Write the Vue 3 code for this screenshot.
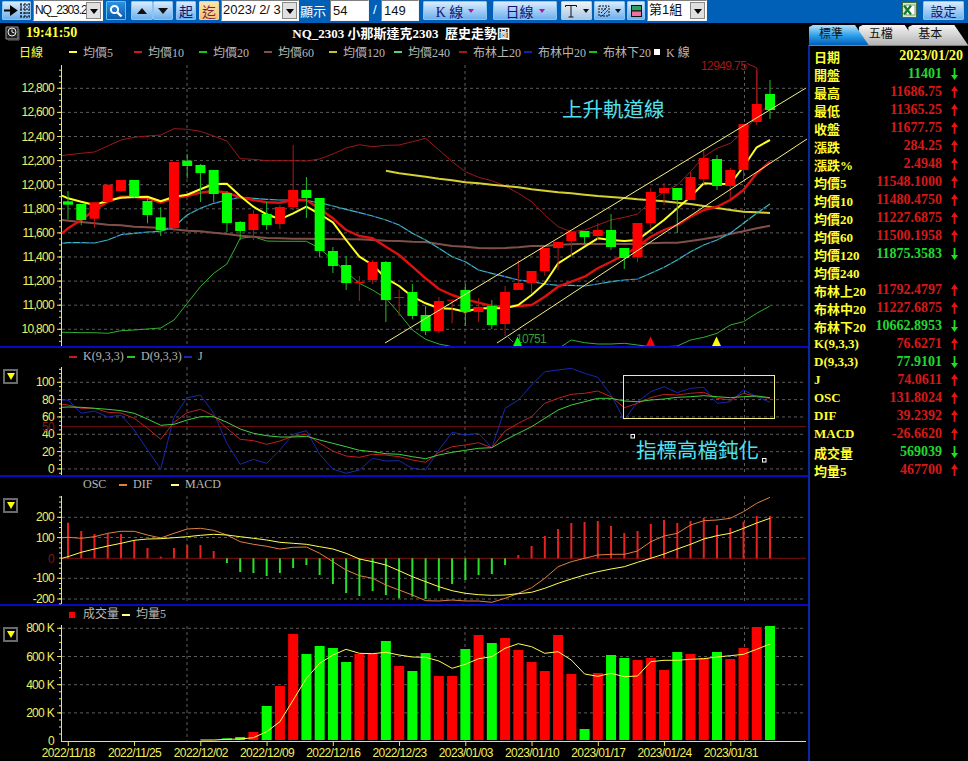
<script setup>
import { computed } from "vue";

// step between bars, every series below has one value per bar
const barX = (i) => 68 + 13.245 * i;

// traced values are in 3x crop units, so page y = top + value / 3
const MAIN_TOP = 60;
const KD_TOP = 345;
const VOL_TOP = 600;

// head is the value where a line leaves the axis, left of the first bar
const toPoints = (values, top, first = 0, head = null) => {
  const pts = values.map((v, i) => `${barX(i + first).toFixed(1)},${(top + v / 3).toFixed(1)}`);
  if (head !== null) pts.unshift(`62,${(top + head / 3).toFixed(1)}`);
  return pts.join(" ");
};

// [bodyTop, bodyBottom, wickTop, wickBottom, up]
const candleData = [
  [424, 434, 393, 478, 0], [432, 480, 432, 495, 0], [427, 476, 427, 503, 1], [374, 426, 374, 430, 1],
  [360, 393, 360, 396, 1], [360, 410, 360, 415, 0], [423, 465, 415, 490, 0], [472, 511, 442, 528, 0],
  [306, 504, 306, 515, 1], [302, 318, 282, 355, 0], [315, 339, 312, 426, 0], [330, 402, 330, 426, 0],
  [399, 489, 393, 516, 0], [486, 513, 483, 540, 0], [462, 510, 450, 540, 1], [462, 495, 426, 510, 0],
  [441, 492, 435, 507, 1], [390, 441, 255, 450, 1], [390, 414, 351, 474, 0], [414, 573, 414, 592, 0],
  [573, 618, 561, 639, 0], [615, 669, 588, 690, 0], [666, 669, 648, 723, 1], [606, 660, 600, 672, 1],
  [606, 720, 603, 786, 0], [711, 714, 688, 768, 1], [696, 768, 672, 778, 0], [765, 813, 738, 825, 0],
  [723, 813, 711, 819, 1], [719, 722, 720, 790, 1], [690, 756, 672, 798, 0], [741, 756, 714, 786, 1],
  [738, 795, 720, 807, 0], [696, 792, 678, 828, 1], [669, 690, 600, 690, 1], [633, 669, 633, 702, 1],
  [564, 633, 564, 648, 1], [546, 564, 546, 630, 1], [516, 543, 516, 588, 1], [513, 531, 513, 552, 0],
  [510, 528, 489, 540, 1], [510, 561, 462, 570, 0], [564, 594, 564, 627, 0], [489, 591, 489, 606, 1],
  [396, 489, 384, 504, 1], [384, 399, 369, 435, 1], [384, 420, 384, 519, 0], [351, 420, 336, 420, 1],
  [294, 357, 267, 372, 1], [297, 378, 285, 390, 0], [330, 378, 324, 420, 1], [192, 330, 192, 357, 1],
  [132, 186, 30, 195, 1], [102, 150, 60, 177, 0],
];

const ma5 = [415, 425, 435, 422, 413, 411, 410, 424, 410, 404, 388, 372, 371, 408, 440, 463, 478, 460, 440, 462, 487, 540, 590, 615, 655, 678, 710, 730, 745, 746, 755, 745, 745, 745, 735, 705, 670, 610, 585, 560, 535, 540, 543, 540, 510, 480, 445, 410, 370, 372, 372, 320, 262, 240];
const ma10 = [505, 480, 450, 425, 410, 411, 415, 428, 415, 408, 398, 392, 398, 412, 420, 427, 428, 420, 420, 447, 475, 510, 528, 535, 560, 585, 620, 655, 687, 705, 718, 728, 738, 740, 738, 735, 710, 680, 665, 650, 625, 605, 585, 560, 530, 510, 495, 470, 450, 440, 420, 390, 340, 305];
const ma20 = [548, 548, 549, 540, 524, 520, 516, 514, 500, 465, 445, 430, 420, 412, 415, 418, 420, 420, 422, 428, 438, 448, 458, 468, 480, 495, 520, 540, 565, 590, 605, 630, 640, 650, 660, 665, 672, 676, 676, 678, 672, 665, 660, 657, 640, 622, 600, 575, 555, 540, 520, 490, 460, 432];
const ma60 = [482, 486, 490, 494, 496, 500, 502, 504, 508, 512, 514, 518, 522, 527, 530, 534, 535, 536, 536, 537, 537, 538, 538, 540, 542, 543, 545, 546, 552, 558, 560, 564, 565, 564, 562, 558, 558, 554, 553, 551, 552, 552, 552, 552, 550, 548, 548, 543, 537, 530, 522, 514, 505, 497];
const ma120 = [332, 340, 345, 350, 356, 361, 367, 370, 374, 378, 382, 388, 392, 397, 400, 404, 408, 411, 414, 418, 421, 424, 428, 432, 438, 444, 450, 455, 457, 459];
const bbUpper = [284, 280, 276, 258, 240, 232, 228, 225, 206, 208, 214, 228, 243, 296, 298, 302, 302, 302, 303, 297, 282, 264, 254, 260, 256, 255, 245, 235, 270, 305, 335, 352, 362, 378, 400, 425, 465, 500, 515, 510, 495, 480, 472, 462, 425, 395, 375, 335, 290, 265, 250, 215, 170, 130];
const bbLower = [817, 818, 818, 820, 812, 810, 807, 804, 780, 730, 680, 640, 612, 535, 530, 543, 544, 544, 544, 565, 600, 635, 670, 690, 715, 760, 810, 838, 852, 860, 866, 866, 866, 866, 866, 866, 866, 866, 840, 848, 852, 852, 850, 855, 860, 860, 858, 840, 832, 820, 795, 785, 760, 738];

const kLine = [180, 190, 190, 202, 204, 220, 250, 283, 232, 203, 193, 212, 250, 283, 287, 298, 288, 273, 268, 295, 318, 333, 337, 328, 330, 335, 345, 352, 322, 305, 300, 293, 308, 258, 235, 215, 175, 160, 148, 145, 138, 155, 188, 175, 158, 148, 150, 145, 142, 160, 165, 145, 155, 160];
const dLine = [186, 187, 190, 193, 197, 205, 222, 241, 238, 225, 215, 215, 232, 252, 265, 272, 276, 276, 274, 285, 295, 305, 316, 320, 326, 328, 335, 341, 330, 322, 316, 310, 308, 285, 265, 245, 220, 195, 180, 170, 160, 160, 168, 170, 165, 162, 157, 155, 152, 155, 158, 155, 153, 158];
const jLine = [165, 205, 198, 216, 210, 255, 315, 372, 216, 158, 150, 205, 295, 358, 343, 355, 315, 268, 257, 328, 372, 385, 375, 340, 348, 347, 370, 375, 315, 262, 270, 265, 308, 190, 165, 120, 80, 75, 70, 85, 97, 150, 225, 170, 140, 125, 143, 130, 127, 175, 170, 135, 155, 172];

const oscTops = [533, 558, 567, 565, 567, 585, 609, 635, 609, 600, 600, 618, 654, 681, 684, 693, 684, 669, 660, 690, 717, 744, 753, 738, 750, 760, 755, 762, 738, 717, 705, 690, 687, 660, 630, 603, 573, 552, 534, 531, 528, 543, 564, 558, 537, 525, 534, 528, 518, 540, 549, 530, 513, 513];
const difLine = [577, 580, 575, 565, 559, 559, 570, 579, 565, 552, 550, 556, 570, 590, 598, 604, 612, 607, 606, 625, 650, 675, 692, 700, 720, 735, 750, 767, 768, 765, 768, 768, 772, 760, 745, 728, 700, 665, 650, 640, 630, 628, 628, 618, 590, 573, 565, 540, 527, 525, 520, 500, 475, 457];
const macdLine = [635, 622, 612, 603, 595, 586, 582, 581, 578, 575, 571, 568, 570, 575, 580, 585, 592, 595, 598, 605, 612, 625, 642, 650, 660, 677, 695, 710, 725, 737, 745, 749, 751, 750, 746, 742, 730, 715, 702, 690, 680, 672, 665, 652, 640, 627, 612, 598, 582, 572, 565, 550, 534, 520];

// volume starts at bar 12, earlier bars are empty
const volTops = [415, 411, 396, 318, 258, 102, 162, 138, 144, 186, 162, 162, 123, 198, 213, 159, 228, 228, 147, 105, 129, 114, 150, 186, 213, 105, 222, 387, 219, 165, 174, 180, 174, 210, 156, 162, 174, 156, 177, 144, 81, 78];
const volUp = [0, 0, 1, 0, 1, 1, 0, 0, 0, 0, 1, 1, 0, 1, 0, 0, 1, 1, 0, 1, 0, 1, 1, 1, 1, 1, 1, 0, 1, 0, 0, 1, 1, 1, 0, 1, 1, 0, 1, 1, 1, 0];
const volAvg = [420, 420, 418, 417, 413, 395, 365, 300, 235, 190, 165, 148, 160, 161, 157, 165, 171, 172, 183, 205, 193, 176, 170, 145, 131, 140, 160, 155, 180, 222, 229, 220, 230, 228, 185, 181, 181, 178, 176, 171, 167, 163, 148, 132];

const candles = computed(() =>
  candleData.map(([top, bottom, wickTop, wickBottom, up], i) => ({
    id: i,
    x: barX(i),
    y: MAIN_TOP + top / 3,
    h: Math.max((bottom - top) / 3, 1),
    wy1: MAIN_TOP + wickTop / 3,
    wy2: MAIN_TOP + wickBottom / 3,
    up,
  }))
);

const oscBars = computed(() =>
  oscTops.map((top, i) => ({ id: i, x: barX(i), y: KD_TOP + top / 3, up: top < 640 }))
);

const volBars = computed(() =>
  volTops.map((top, i) => ({
    id: i,
    x: barX(i + 12),
    y: VOL_TOP + top / 3,
    h: (420 - top) / 3,
    up: volUp[i],
  }))
);

const minorTicks = (start, step, end) => {
  const out = [];
  for (let y = start; y < end; y += step) out.push(y);
  return out;
};

const priceAxis = ["12,800", "12,600", "12,400", "12,200", "12,000", "11,800", "11,600", "11,400", "11,200", "11,000", "10,800"].map((label, i) => ({
  label,
  y: 88.3 + i * 24.1,
}));
const kdAxis = ["100", "80", "60", "40", "20", "0"].map((label, i) => ({ label, y: 382.3 + i * 17.33 }));
const macdAxis = [
  { label: "200", y: 517.3 },
  { label: "100", y: 537.5 },
  { label: "-100", y: 578.3 },
  { label: "-200", y: 599 },
];
const volAxis = ["800 K", "600 K", "400 K", "200 K"].map((label, i) => ({ label, y: 628.3 + i * 28.2 }));

const vGrid = [187, 465, 744.5];

const dateLabels = ["2022/11/18", "2022/11/25", "2022/12/02", "2022/12/09", "2022/12/16", "2022/12/23", "2023/01/03", "2023/01/10", "2023/01/17", "2023/01/24", "2023/01/31"].map((label, i) => ({
  label,
  x: 68.3 + i * 66.25,
}));

const mainLegend = [
  { name: "均價5", color: "#ffff40" },
  { name: "均價10", color: "#d01818" },
  { name: "均價20", color: "#18c018" },
  { name: "均價60", color: "#805048" },
  { name: "均價120", color: "#c8c030" },
  { name: "均價240", color: "#50d080" },
  { name: "布林上20", color: "#a01818" },
  { name: "布林中20", color: "#1020b0" },
  { name: "布林下20", color: "#18c018" },
];

const quotes = [
  { name: "開盤", value: "11401", up: false },
  { name: "最高", value: "11686.75", up: true },
  { name: "最低", value: "11365.25", up: true },
  { name: "收盤", value: "11677.75", up: true },
  { name: "漲跌", value: "284.25", up: true },
  { name: "漲跌%", value: "2.4948", up: true },
  { name: "均價5", value: "11548.1000", up: true },
  { name: "均價10", value: "11480.4750", up: true },
  { name: "均價20", value: "11227.6875", up: true },
  { name: "均價60", value: "11500.1958", up: true },
  { name: "均價120", value: "11875.3583", up: false },
  { name: "均價240", value: "", up: null },
  { name: "布林上20", value: "11792.4797", up: true },
  { name: "布林中20", value: "11227.6875", up: true },
  { name: "布林下20", value: "10662.8953", up: false },
  { name: "K(9,3,3)", value: "76.6271", up: true },
  { name: "D(9,3,3)", value: "77.9101", up: false },
  { name: "J", value: "74.0611", up: true },
  { name: "OSC", value: "131.8024", up: true },
  { name: "DIF", value: "39.2392", up: true },
  { name: "MACD", value: "-26.6620", up: true },
  { name: "成交量", value: "569039", up: false },
  { name: "均量5", value: "467700", up: true },
];
</script>

<template>
  <div class="screen">
    <header class="toolbar">
      <button class="btn tb-list">
        <svg width="27" height="17" viewBox="0 0 27 17">
          <path d="M1 8.5h9M8 5l5 3.5-5 3.5z" fill="#000" stroke="#000" stroke-width="2" />
          <path d="M18 1v15M22 1v15M26 1v15M17 3h10M17 7h10M17 11h10M17 15h10" stroke="#000" stroke-dasharray="2 1" fill="none" />
        </svg>
      </button>
      <div class="combo tb-symbol"><span class="combo-text symbol-text">NQ_2303.2</span><span class="combo-arrow"></span></div>
      <button class="btn tb-search">
        <svg width="16" height="16" viewBox="0 0 16 16">
          <circle cx="6.5" cy="6.5" r="3.6" fill="none" stroke="#fff" stroke-width="2" />
          <path d="M9.5 9.5l4 4" stroke="#fff" stroke-width="2.4" />
        </svg>
      </button>
      <button class="btn tb-up"><span class="tri-up"></span></button>
      <button class="btn tb-down"><span class="tri-down"></span></button>
      <button class="btn tb-start">起</button>
      <button class="btn tb-end">迄</button>
      <div class="combo tb-date"><span class="combo-text">2023/ 2/ 3</span><span class="combo-arrow"></span></div>
      <span class="tb-label">顯示</span>
      <span class="field tb-count">54</span>
      <span class="tb-slash">/</span>
      <span class="field tb-total">149</span>
      <button class="btn tb-kline">K 線<i class="caret"></i></button>
      <button class="btn tb-period">日線<i class="caret"></i></button>
      <button class="btn tb-text">
        <svg width="14" height="14" viewBox="0 0 14 14"><path d="M1.5 3V1.5h11V3M7 1.5V13M4.5 13h5" fill="none" stroke="#111" /></svg>
        <i class="caret dark"></i>
      </button>
      <button class="btn tb-draw">
        <svg width="12" height="14" viewBox="0 0 12 14"><path d="M1 2h10v10H1zM3 5h6M3 9l6-6M4 12l6-6" fill="none" stroke="#111" stroke-dasharray="2 1" /></svg>
        <i class="caret dark"></i>
      </button>
      <button class="btn tb-color">
        <svg width="11" height="12" viewBox="0 0 11 12">
          <rect x="0.5" y="0.5" width="10" height="5.5" fill="#30a060" stroke="#111" />
          <rect x="0.5" y="6" width="10" height="5.5" fill="#f070a0" stroke="#111" />
        </svg>
      </button>
      <div class="combo tb-group"><span class="combo-text">第1組</span><span class="combo-arrow"></span></div>
      <span class="tb-excel">
        <svg width="15" height="16" viewBox="0 0 15 16">
          <rect x="0.5" y="0.5" width="14" height="15" fill="#d8e8c8" stroke="#407040" />
          <rect x="4" y="3" width="9" height="10" fill="#fff" stroke="#80a080" />
          <path d="M2 3.5l7 9M9 3.5l-7 9" stroke="#1a7a30" stroke-width="2.2" />
        </svg>
      </span>
      <button class="btn tb-settings">設定</button>
    </header>

    <div class="body">
      <main class="charts">
        <div class="title-row">
          <svg class="clock" width="15" height="15" viewBox="0 0 15 15">
            <path d="M1 1h12v12H1z" fill="#222" stroke="#999" />
            <path d="M14 3v11H3" fill="none" stroke="#666" />
            <circle cx="7" cy="6" r="4" fill="none" stroke="#eee" />
            <path d="M7 3.5V6l2.5 1" fill="none" stroke="#eee" />
          </svg>
          <span class="time">19:41:50</span>
          <span class="title">NQ_2303 小那斯達克2303&nbsp; 歷史走勢圖</span>
        </div>
        <div class="legend main-legend">
          <span class="period">日線</span>
          <span v-for="item in mainLegend" :key="item.name" class="legend-item">
            <i class="dash" :style="{ background: item.color }"></i>{{ item.name }}
          </span>
          <span class="legend-item"><i class="square white"></i>K 線</span>
        </div>

        <svg class="plot" width="808" height="286" viewBox="0 60 808 286">
          <g class="grid">
            <line v-for="t in priceAxis" :key="t.label" x1="62" x2="806" :y1="t.y" :y2="t.y" />
            <line v-for="x in vGrid" :key="x" :x1="x" :x2="x" y1="65" y2="346" />
          </g>
          <g class="axis">
            <line x1="61.5" x2="61.5" y1="65" y2="346" />
            <line v-for="y in minorTicks(70.2, 6.025, 346)" :key="y" x1="59" x2="61" :y1="y" :y2="y" />
            <line v-for="t in priceAxis" :key="t.label" x1="57" x2="61" :y1="t.y" :y2="t.y" />
          </g>
          <text v-for="t in priceAxis" :key="t.label" class="tick-label" x="54" :y="t.y + 4">{{ t.label }}</text>

          <polyline class="ln" :points="toPoints(bbLower, MAIN_TOP, 0, 817)" stroke="#30b030" />
          <polyline class="ln" :points="toPoints(bbUpper, MAIN_TOP, 0, 287)" stroke="#a01818" />
          <polyline class="ln" :points="toPoints(ma60, MAIN_TOP, 0, 480)" stroke="#805048" stroke-width="2" />
          <polyline class="ln" :points="toPoints(ma120, MAIN_TOP, 24)" stroke="#d8d030" stroke-width="2" />
          <polyline class="ln" :points="toPoints(ma20, MAIN_TOP, 0, 550)" stroke="#40b8b8" stroke-width="1.2" />
          <polyline class="ln" :points="toPoints(ma20, MAIN_TOP, 0, 550)" stroke="#1830c0" stroke-dasharray="2 7" />
          <polyline class="ln" :points="toPoints(ma10, MAIN_TOP, 0, 520)" stroke="#e01010" stroke-width="2.4" />
          <polyline class="ln" :points="toPoints(ma5, MAIN_TOP, 0, 407)" stroke="#ffff20" stroke-width="2" />

          <g v-for="c in candles" :key="c.id">
            <line :x1="c.x" :x2="c.x" :y1="c.wy1" :y2="c.wy2" :stroke="c.up ? '#b01818' : '#20c020'" />
            <rect :x="c.x - 5" :y="c.y" width="10" :height="c.h" :fill="c.up ? '#ff0000' : '#00ff00'" />
          </g>

          <line class="channel" x1="385" y1="343" x2="806" y2="88" />
          <line class="channel" x1="497" y1="343" x2="807" y2="139" />

          <path d="M747 63.5l10 4.5V104" fill="none" stroke="#a01818" />
          <text class="peak" x="701" y="70">12949.75</text>
          <path d="M507 336l6 6" stroke="#2a9a2a" fill="none" />
          <text class="trough" x="516" y="343">10751</text>
          <path d="M513 346l4.5-9.5 4.5 9.5z" fill="#00ff00" />
          <path d="M646 346l4.5-9.5 4.5 9.5z" fill="#ff0000" />
          <path d="M712 346l4.5-9.5 4.5 9.5z" fill="#ffff00" />
          <text class="note" x="562" y="117">上升軌道線</text>
        </svg>

        <div class="sep"></div>

        <section class="panel">
          <div class="legend kd-legend">
            <span class="kd-k"><i class="dash red"></i>K(9,3,3)</span>
            <span class="kd-d"><i class="dash green"></i>D(9,3,3)</span>
            <span class="kd-j"><i class="dash navy"></i>J</span>
          </div>
          <svg class="plot" width="808" height="109" viewBox="0 366 808 109">
            <g class="grid">
              <line v-for="t in kdAxis" :key="t.label" x1="62" x2="806" :y1="t.y" :y2="t.y" />
              <line v-for="x in vGrid" :key="x" :x1="x" :x2="x" y1="367" y2="475" />
            </g>
            <g class="axis">
              <line x1="61.5" x2="61.5" y1="367" y2="475" />
              <line v-for="y in minorTicks(369.3, 4.33, 475)" :key="y" x1="59" x2="61" :y1="y" :y2="y" />
              <line v-for="t in kdAxis" :key="t.label" x1="57" x2="61" :y1="t.y" :y2="t.y" />
            </g>
            <text v-for="t in kdAxis" :key="t.label" class="tick-label" x="54" :y="t.y + 4">{{ t.label }}</text>
            <text class="tick-label dim" x="54" y="431">50</text>
            <line x1="62" x2="806" y1="426.7" y2="426.7" stroke="#801010" />
            <polyline class="ln" :points="toPoints(jLine, KD_TOP, 0, 165)" stroke="#1828b0" />
            <polyline class="ln" :points="toPoints(kLine, KD_TOP, 0, 178)" stroke="#c02020" />
            <polyline class="ln" :points="toPoints(dLine, KD_TOP, 0, 187)" stroke="#40d040" />
            <rect class="note-box" x="623.5" y="375.5" width="151" height="43" />
            <rect class="handle" x="631" y="434.5" width="3.5" height="3.5" />
            <rect class="handle" x="762.5" y="458.5" width="3.5" height="3.5" />
            <text class="note" x="636" y="458">指標高檔鈍化</text>
          </svg>
          <button class="toggle"><span class="toggle-tri"></span></button>
        </section>

        <div class="sep"></div>

        <section class="panel">
          <div class="legend macd-legend">
            <span class="m-osc">OSC</span>
            <span class="m-dif"><i class="dash orange"></i>DIF</span>
            <span class="m-macd"><i class="dash pale"></i>MACD</span>
          </div>
          <svg class="plot open" width="808" height="110" viewBox="0 494 808 110">
            <g class="grid">
              <line v-for="t in macdAxis" :key="t.label" x1="62" x2="806" :y1="t.y" :y2="t.y" />
              <line v-for="x in vGrid" :key="x" :x1="x" :x2="x" y1="496" y2="604" />
            </g>
            <g class="axis">
              <line x1="61.5" x2="61.5" y1="496" y2="604" />
              <line v-for="y in minorTicks(497, 5.09, 604)" :key="y" x1="59" x2="61" :y1="y" :y2="y" />
              <line v-for="t in macdAxis" :key="t.label" x1="57" x2="61" :y1="t.y" :y2="t.y" />
            </g>
            <text v-for="t in macdAxis" :key="t.label" class="tick-label" x="54" :y="t.y + 4">{{ t.label }}</text>
            <text class="tick-label dim" x="54" y="562.5">0</text>
            <line x1="62" x2="806" y1="558.3" y2="558.3" stroke="#801010" />
            <line
              v-for="b in oscBars"
              :key="b.id"
              :x1="b.x"
              :x2="b.x"
              :y1="b.y"
              y2="558.3"
              :stroke="b.up ? '#e82020' : '#28e028'"
              stroke-width="2"
            />
            <polyline class="ln" :points="toPoints(difLine, KD_TOP, 0, 578)" stroke="#e08040" />
            <polyline class="ln" :points="toPoints(macdLine, KD_TOP, 0, 640)" stroke="#ffff50" />
          </svg>
          <button class="toggle"><span class="toggle-tri"></span></button>
        </section>

        <div class="sep"></div>

        <section class="panel">
          <div class="legend vol-legend">
            <span class="v-vol"><i class="square red-sq"></i>成交量</span>
            <span class="v-avg"><i class="dash pale"></i>均量5</span>
          </div>
          <svg class="plot open" width="808" height="137" viewBox="0 624 808 137">
            <g class="grid">
              <line v-for="t in volAxis" :key="t.label" x1="62" x2="806" :y1="t.y" :y2="t.y" />
              <line v-for="x in vGrid" :key="x" :x1="x" :x2="x" y1="626" y2="741" />
            </g>
            <g class="axis">
              <line x1="61.5" x2="61.5" y1="625" y2="742" />
              <line x1="61" x2="806" y1="741.5" y2="741.5" />
              <line v-for="y in minorTicks(628.3, 7.05, 741)" :key="y" x1="59" x2="61" :y1="y" :y2="y" />
              <line v-for="t in volAxis" :key="t.label" x1="57" x2="61" :y1="t.y" :y2="t.y" />
              <line v-for="d in dateLabels" :key="d.label" :x1="d.x" :x2="d.x" y1="742" y2="746" />
            </g>
            <text v-for="t in volAxis" :key="t.label" class="tick-label" x="54" :y="t.y + 4">{{ t.label }}</text>
            <text class="tick-label" x="54" y="744.5">0</text>
            <rect v-for="b in volBars" :key="b.id" :x="b.x - 5" :y="b.y" width="10" :height="b.h" :fill="b.up ? '#ff0000' : '#00ff00'" />
            <polyline class="ln" :points="toPoints(volAvg, VOL_TOP, 10)" stroke="#ffff50" />
            <text v-for="d in dateLabels" :key="d.label" class="date-label" :x="d.x" y="757">{{ d.label }}</text>
          </svg>
          <button class="toggle"><span class="toggle-tri"></span></button>
        </section>
      </main>

      <aside class="side">
        <nav class="tabs">
          <span class="tab active">標準</span>
          <span class="tab second">五檔</span>
          <span class="tab third">基本</span>
        </nav>
        <div class="quote-list">
          <div class="quote date-row"><span class="q-name">日期</span><span class="q-date">2023/01/20</span></div>
          <div v-for="q in quotes" :key="q.name" class="quote">
            <span class="q-name">{{ q.name }}</span>
            <span class="q-value" :class="q.up ? 'rise' : 'fall'">{{ q.value }}</span>
            <svg v-if="q.up !== null" class="q-arrow" width="7" height="12" viewBox="0 0 7 12">
              <path v-if="q.up" d="M3.5 0L7 5H4.4v7H2.6V5H0z" fill="#ee1010" />
              <path v-else d="M3.5 12L7 7H4.4V0H2.6v7H0z" fill="#20e020" />
            </svg>
          </div>
        </div>
      </aside>
    </div>
  </div>
</template>

<style>
html,
body {
  margin: 0;
  background: #000;
}
</style>

<style scoped>
.screen {
  width: 968px;
  height: 761px;
  overflow: hidden;
  background: #000;
  display: flex;
  flex-direction: column;
  font-family: "Liberation Sans", "Noto Sans CJK TC", sans-serif;
}

/* toolbar */
.toolbar {
  height: 23px;
  flex: none;
  background: #0060b8;
  display: flex;
  align-items: flex-start;
  font-size: 13px;
  color: #101060;
}
.btn {
  height: 19px;
  padding: 0;
  margin-top: 1px;
  border: 1px solid #8cc4f4;
  border-radius: 1px;
  background: linear-gradient(#d8ebfc, #6fb0ee);
  display: flex;
  align-items: center;
  justify-content: center;
  gap: 5px;
  font: 14px "Liberation Serif", "Noto Sans CJK TC", sans-serif;
  color: #14146e;
  box-sizing: border-box;
}
.tb-list { width: 29px; margin-left: 2px; }
.tb-symbol { width: 70px; margin-left: 2px; }
.tb-search { width: 20px; margin-left: 3px; background: linear-gradient(#2a90e0, #0a5cb0); border-color: #50c8f0; }
.tb-up { width: 22px; margin-left: 5px; }
.tb-down { width: 20px; margin-left: 0; }
.tb-start { width: 20px; margin-left: 3px; }
.tb-end { width: 20px; margin-left: 3px; background: linear-gradient(#fbe6b0, #f4c070); border-color: #f4d090; color: #7a2040; }
.tb-date { width: 78px; margin-left: 2px; }
.tb-label { width: 26px; margin-left: 1px; margin-top: 1px; color: #fff; font: 13px/19px "Noto Sans CJK TC", sans-serif; }
.tb-count { width: 39px; margin-left: 4px; }
.tb-slash { width: 12px; padding-left: 4px; box-sizing: border-box; color: #fff; line-height: 20px; }
.tb-total { width: 38px; }
.tb-kline { width: 64px; margin-left: 4px; }
.tb-period { width: 64px; margin-left: 6px; }
.tb-text { width: 31px; margin-left: 4px; background: linear-gradient(#f0f4f4, #a8c8e8); border-color: #d8c890; }
.tb-draw { width: 31px; margin-left: 2px; }
.tb-color { width: 18px; margin-left: 2px; }
.tb-group { width: 60px; margin-left: 2px; }
.tb-excel { width: 15px; margin-left: auto; margin-top: 2px; height: 16px; }
.tb-settings { width: 41px; margin-left: 6px; margin-right: 4px; font-size: 13px; }
.caret {
  width: 0;
  height: 0;
  border-left: 3.5px solid transparent;
  border-right: 3.5px solid transparent;
  border-top: 4px solid #a020a0;
}
.caret.dark { border-top-color: #111; }
.tri-up,
.tri-down {
  width: 0;
  height: 0;
  border-left: 5px solid transparent;
  border-right: 5px solid transparent;
}
.tri-up { border-bottom: 6px solid #111; }
.tri-down { border-top: 6px solid #111; }

.combo,
.field {
  height: 21px;
  background: #fff;
  border: 1px solid #f4f4f4;
  border-top-color: #808080;
  border-left-color: #808080;
  box-sizing: border-box;
  color: #111;
  font: 13px/19px "Liberation Sans", "Noto Sans CJK TC", sans-serif;
}
.combo {
  display: flex;
  overflow: hidden;
  padding: 1px;
  border-width: 1px;
}
.field { padding-left: 2px; }
.combo-text {
  flex: 1;
  min-width: 0;
  white-space: nowrap;
  overflow: hidden;
  line-height: 16px;
}
.symbol-text {
  font-size: 12px;
  letter-spacing: -1.1px;
}
.combo-arrow {
  flex: none;
  width: 15px;
  background: #e0e0e0;
  border: 1px solid #888;
  box-sizing: border-box;
  position: relative;
}
.combo-arrow::after {
  content: "";
  position: absolute;
  left: 3px;
  top: 6px;
  border-left: 4px solid transparent;
  border-right: 4px solid transparent;
  border-top: 5px solid #000;
}

/* charts */
.body {
  flex: 1;
  min-height: 0;
  display: flex;
}
.charts {
  width: 808px;
  flex: none;
  display: flex;
  flex-direction: column;
}
.title-row {
  height: 20px;
  flex: none;
  display: flex;
  align-items: center;
  padding-left: 5px;
  position: relative;
}
.time {
  margin-left: 6px;
  color: #ffff40;
  font: bold 14px "Liberation Serif", serif;
}
.title {
  margin-left: 215px;
  margin-bottom: 2px;
  color: #fff;
  font: bold 13px "Liberation Serif", "Noto Sans CJK TC", serif;
  white-space: nowrap;
}
.legend {
  display: flex;
  align-items: center;
  color: #b8b8b8;
  font: 12px "Liberation Serif", "Noto Sans CJK TC", serif;
  white-space: nowrap;
}
.main-legend {
  height: 17px;
  flex: none;
}
.period {
  width: 69px;
  padding-left: 19px;
  box-sizing: border-box;
  color: #ffff40;
}
.legend-item {
  width: 65px;
  flex: none;
  display: flex;
  align-items: center;
}
.dash {
  display: inline-block;
  width: 8px;
  height: 2px;
  margin-right: 6px;
  flex: none;
  vertical-align: middle;
}
.red { background: #c02020; }
.green { background: #30c030; }
.navy { background: #1828b0; }
.orange { background: #e08040; }
.pale { background: #ffff80; }
.square {
  display: inline-block;
  width: 6px;
  height: 6px;
  margin-right: 6px;
}
.white { background: #fff; }
.red-sq { background: #ff0000; margin-right: 8px; }
.sep {
  height: 2px;
  flex: none;
  background: #0808c8;
}
.panel {
  position: relative;
  flex: none;
}
.kd-legend {
  height: 18px;
  box-sizing: border-box;
  padding-bottom: 2px;
}
.macd-legend {
  height: 17px;
  box-sizing: border-box;
  padding-bottom: 2px;
}
.vol-legend {
  height: 18px;
  box-sizing: border-box;
  padding-bottom: 4px;
}
.kd-k { margin-left: 69px; width: 58px; }
.kd-d { width: 57px; }
.m-osc { margin-left: 83px; width: 36px; }
.m-dif { width: 52px; }
.v-vol { margin-left: 69px; width: 53px; }
.plot {
  display: block;
}
.plot.open {
  overflow: visible;
}
.grid line {
  stroke: #5c5c5c;
  stroke-dasharray: 3 3;
}
.axis line {
  stroke: #e8e860;
}
.tick-label {
  fill: #f0f060;
  font: 12px "Liberation Sans", sans-serif;
  letter-spacing: -0.7px;
  text-anchor: end;
}
.tick-label.dim { fill: #801818; }
.date-label {
  fill: #f0f060;
  font: 12px "Liberation Sans", sans-serif;
  letter-spacing: -0.6px;
  text-anchor: middle;
}
.ln {
  fill: none;
  stroke-linejoin: round;
}
.channel {
  stroke: #f4f080;
}
.peak {
  fill: #a01818;
  font: 12px "Liberation Sans", sans-serif;
  letter-spacing: -0.6px;
}
.trough {
  fill: #30a030;
  font: 12px "Liberation Sans", sans-serif;
  letter-spacing: -0.67px;
}
.note {
  fill: #50e0f0;
  font: 20.5px "Noto Sans CJK TC", sans-serif;
}
.note-box {
  fill: none;
  stroke: #f4f080;
}
.handle {
  fill: #000;
  stroke: #fff;
}
.toggle {
  position: absolute;
  top: 21px;
  left: 3px;
  width: 15px;
  height: 15px;
  padding: 0;
  background: #000;
  border: 2px solid #6a6a6a;
  box-sizing: border-box;
  display: flex;
  align-items: center;
  justify-content: center;
}
.toggle-tri {
  width: 0;
  height: 0;
  border-left: 4px solid transparent;
  border-right: 4px solid transparent;
  border-top: 7px solid #ffff00;
}

/* quote side */
.side {
  flex: 1;
  min-width: 0;
  display: flex;
  flex-direction: column;
}
.tabs {
  height: 22px;
  padding-top: 2px;
  display: flex;
  flex: none;
  box-sizing: border-box;
}
.tab {
  width: 60px;
  height: 20px;
  margin-right: -10px;
  padding-left: 10px;
  box-sizing: border-box;
  background: linear-gradient(#f4f4f4, #b4b4b4);
  clip-path: polygon(0 10%, 4px 0, 46px 0, 100% 100%, 0 100%);
  color: #111;
  font: 12px/16px "Noto Sans CJK TC", sans-serif;
}
.tab.active {
  background: linear-gradient(#a8dcfa 5%, #2a9ce8 55%, #0060b8);
  margin-left: 1px;
  position: relative;
  z-index: 3;
}
.tab.second { position: relative; z-index: 2; }
.tab.third { margin-right: 0; }
.quote-list {
  flex: 1;
  border-left: 2px solid #0828a0;
  padding-top: 1px;
  border-top: 1px solid #808080;
}
.quote {
  height: 18px;
  display: flex;
  align-items: center;
  padding-left: 4px;
  position: relative;
}
.q-name {
  flex: none;
  color: #ffff30;
  font: bold 13px "Liberation Serif", "Noto Sans CJK TC", serif;
  white-space: nowrap;
}
.q-date {
  margin-left: auto;
  margin-right: 5px;
  color: #ffff40;
  font: bold 14px "Liberation Serif", serif;
}
.q-value {
  margin-left: auto;
  margin-right: 26px;
  font: bold 14px "Liberation Serif", serif;
}
.rise { color: #d81818; }
.fall { color: #20d830; }
.q-arrow {
  position: absolute;
  left: 141px;
  top: 3px;
}
</style>
